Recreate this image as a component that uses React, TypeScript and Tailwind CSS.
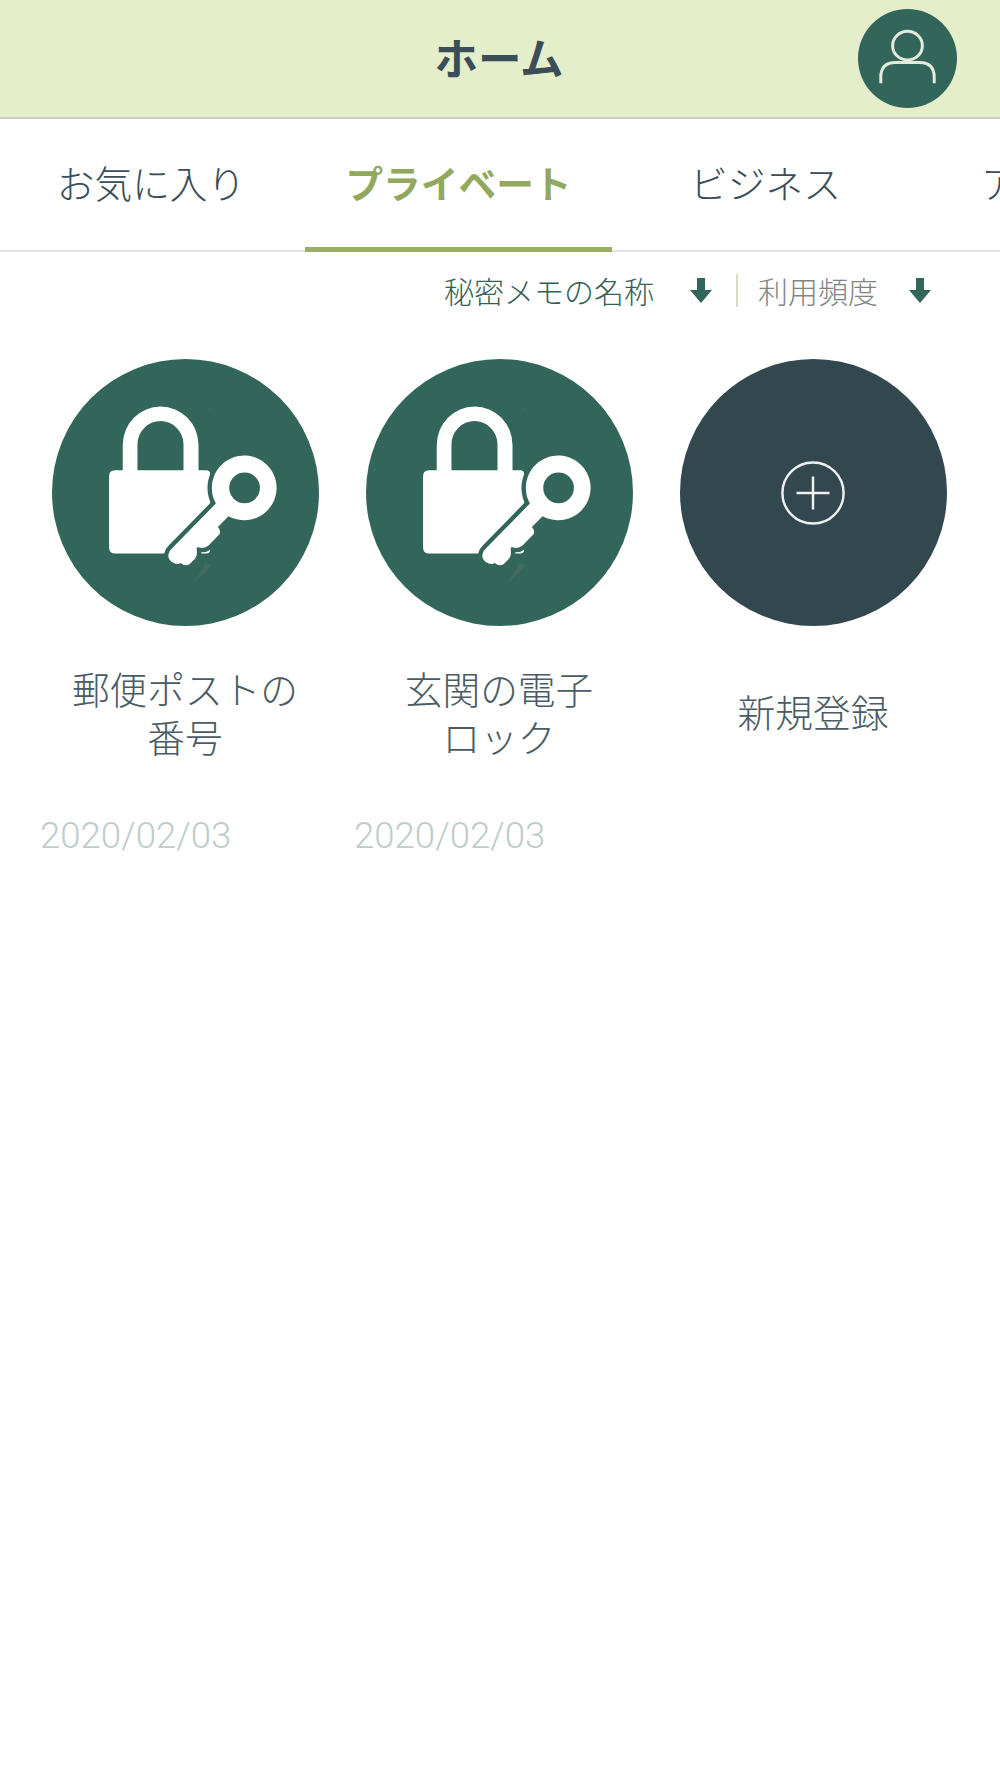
const FONT = "font-['Noto_Sans_CJK_JP','Noto_Sans',sans-serif]";

function UserIcon() {
  return (
    <svg viewBox="0 0 100 100" className="w-full h-full" fill="none" stroke="#e3ebdc" strokeWidth="3">
      <ellipse cx="50" cy="37" rx="15" ry="14.5" />
      <path d="M23 75 V69 Q23 54 38 54 H62 Q77 54 77 69 V75" />
    </svg>
  );
}

function SortArrow() {
  return (
    <svg viewBox="0 0 22 26" className="w-[22px] h-[26px] shrink-0" fill="#33665b">
      <path d="M7 1 H15 V13 H22 L11 26 L0 13 H7 Z" />
    </svg>
  );
}

const KEY =
  "M557 490 A97 97 0 1 1 595 528 L563 560 Q573 570 568 582 L535 616 Q520 628 503 620 Q498 622 500 632 Q502 650 490 660 L478 672 Q465 680 452 668 Q440 675 425 665 Q412 655 415 642 Q417 632 425 625 Z";

function LockKey() {
  return (
    <svg viewBox="66 57 800 800" className="w-full h-full">
      <path d="M540 215 L532 198 L548 212 Z" fill="#3d6a5f" />
      <path d="M490 730 L525 668 L546 676 Z" fill="#44695f" />
      <path
        fillRule="evenodd"
        fill="#fff"
        d="M278 390 V315 A113 115 0 0 1 505 315 V390 H528 Q540 390 540 402 V628 Q540 640 528 640 H255 Q237 640 237 622 V408 Q237 390 255 390 Z M322 390 H460 V313 A69 70 0 0 0 322 313 Z"
      />
      <path d={KEY} fill="#33665b" stroke="#33665b" strokeWidth="26" strokeLinejoin="round" />
      <path d={KEY} fill="#fff" />
      <circle cx="643" cy="443" r="46" fill="#33665b" />
    </svg>
  );
}

function PlusIcon() {
  return (
    <svg viewBox="0 0 68 68" className="w-[66px] h-[66px]" fill="none" stroke="#eef1f0">
      <circle cx="34" cy="34" r="31.5" strokeWidth="2.5" />
      <path d="M34 17 V51 M17 34 H51" strokeWidth="2.5" />
    </svg>
  );
}

function Memo({ lines, date }: { lines: string[]; date: string }) {
  return (
    <div className="w-[314px] flex flex-col shrink-0">
      <div className="mx-auto w-[267px] h-[267px] rounded-full bg-[#33665b]">
        <LockKey />
      </div>
      <div className="mt-[38px] h-[96px] text-center text-[37.7px] leading-[48px] text-[#4a5b63] font-light">
        {lines.map((l) => (
          <div key={l}>{l}</div>
        ))}
      </div>
      <div className="mt-[52px] ml-[12px] font-['Roboto',sans-serif] text-[36.6px] leading-[48px] text-[#bfcdca] font-light">
        {date}
      </div>
    </div>
  );
}

export default function App() {
  return (
    <div className={`${FONT} bg-white min-h-screen w-[1000px] overflow-hidden`}>
      <header className="h-[119px] bg-[#e5eeca] border-b-2 border-[#c9ccc2] grid grid-cols-[1fr_auto_1fr] items-center">
        <div />
        <h1 className="text-[43.5px] font-bold text-[#3b4d57] leading-none -mt-[3px] pr-[2px]">ホーム</h1>
        <div className="justify-self-end mr-[43px] w-[99px] h-[99px] rounded-full bg-[#33665b] -mt-[1px]">
          <UserIcon />
        </div>
      </header>

      <nav className="h-[133px] flex border-b-2 border-[#e3e5e3] overflow-visible">
        <div className="w-[305px] shrink-0 flex items-center justify-center pb-[4px] pr-[3px] text-[37.7px] font-light text-[#3b4d57]">
          お気に入り
        </div>
        <div className="w-[307px] shrink-0 -mb-[2px] border-b-[5px] border-[#9aae69] flex items-center justify-center pb-[1px] text-[37.7px] font-bold text-[#93a85f]">
          プライベート
        </div>
        <div className="w-[307px] shrink-0 flex items-center justify-center pb-[4px] text-[37.7px] font-light text-[#3b4d57]">
          ビジネス
        </div>
        <div className="flex-1 overflow-hidden flex items-center pb-[4px] pl-[62px] text-[37.7px] font-light text-[#3b4d57] whitespace-nowrap">
          アプリ
        </div>
      </nav>

      <div className="h-[107px] flex items-start justify-end pr-[69px] pt-[21px]">
        <div className="flex items-center h-[34px]">
          <span className="text-[30px] leading-none text-[#355e54] font-light">秘密メモの名称</span>
          <span className="ml-[36px]">
            <SortArrow />
          </span>
          <span className="ml-[24px] w-[2px] h-[33px] bg-[#d5dcc0]" />
          <span className="ml-[20px] text-[30px] leading-none text-[#808583] font-light">利用頻度</span>
          <span className="ml-[31px]">
            <SortArrow />
          </span>
        </div>
      </div>

      <main className="flex pl-[28px]">
        <Memo lines={["郵便ポストの", "番号"]} date="2020/02/03" />
        <Memo lines={["玄関の電子", "ロック"]} date="2020/02/03" />
        <div className="w-[314px] flex flex-col shrink-0">
          <div className="mx-auto w-[267px] h-[267px] rounded-full bg-[#33474f] flex items-center justify-center">
            <PlusIcon />
          </div>
          <div className="mt-[37px] h-[96px] flex items-center justify-center text-[37.7px] leading-[48px] text-[#4a5b63] font-light">
            新規登録
          </div>
        </div>
      </main>
    </div>
  );
}
